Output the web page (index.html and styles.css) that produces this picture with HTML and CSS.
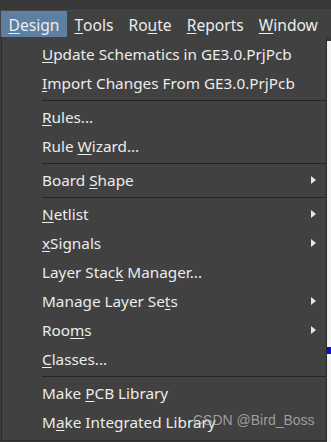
FILE: index.html
```html
<!DOCTYPE html>
<html lang="en">
<head>
    <meta charset="UTF-8">
    <title>Design Menu</title>
    <link rel="stylesheet" href="styles.css">
</head>
<body>
    <div class="topstrip"></div>
    <div class="menubar">
        <span class="bar-item active"><u>D</u>esign</span>
        <span class="bar-item"><u>T</u>ools</span>
        <span class="bar-item">Ro<u>u</u>te</span>
        <span class="bar-item"><u>R</u>eports</span>
        <span class="bar-item"><u>W</u>indow</span>
    </div>
    <div class="workspace">
        <div class="dropdown">
            <div class="item"><u>U</u>pdate Schematics in GE3.0.PrjPcb</div>
            <div class="item"><u>I</u>mport Changes From GE3.0.PrjPcb</div>
            <div class="sep"></div>
            <div class="item"><u>R</u>ules...</div>
            <div class="item">Rule <u>W</u>izard...</div>
            <div class="sep"></div>
            <div class="item sub">Board <u>S</u>hape</div>
            <div class="sep"></div>
            <div class="item sub"><u>N</u>etlist</div>
            <div class="item sub"><u>x</u>Signals</div>
            <div class="item">Layer Stac<u>k</u> Manager...</div>
            <div class="item sub">Manage Layer Se<u>t</u>s</div>
            <div class="item sub">Roo<u>m</u>s</div>
            <div class="item"><u>C</u>lasses...</div>
            <div class="sep"></div>
            <div class="item">Make <u>P</u>CB Library</div>
            <div class="item">M<u>a</u>ke Integrated Library</div>
        </div>
        <div class="canvas">
            <div class="blue-mark"></div>
        </div>
        <div class="watermark">CSDN @Bird_Boss</div>
    </div>
</body>
</html>
```

FILE: styles.css
```css
body {
    margin: 0;
    width: 331px;
    height: 442px;
    overflow: hidden;
    background-color: #3a3a3a;
    font-family: "Noto Sans", "Open Sans", sans-serif;
    font-size: 15.3px;
    color: #ececec;
}
u {
    text-decoration-thickness: 1px;
    text-underline-offset: 2px;
}
.topstrip {
    height: 10px;
    background-color: #393939;
    border-bottom: 1px solid #4a4a4a;
}
.menubar {
    display: flex;
    height: 26px;
    padding-left: 1px;
    background-color: #414141;
    font-size: 15.6px;
}
.bar-item {
    display: flex;
    align-items: center;
    padding: 1px 7.5px 0;
    height: 100%;
    box-sizing: border-box;
    white-space: nowrap;
}
.active {
    background-color: #5d7fa2;
}
.workspace {
    position: relative;
    display: flex;
    height: 405px;
}
.dropdown {
    width: 324px;
    margin-left: 1px;
    padding-top: 3px;
    background-color: #414141;
    border: 1px solid #2c2c2c;
    border-top: none;
    height: 400px;
}
.item {
    position: relative;
    height: 29px;
    line-height: 29px;
    padding-left: 40px;
    white-space: nowrap;
}
.sub::after {
    content: "";
    position: absolute;
    right: 10px;
    top: 10px;
    border-left: 5px solid #e6e6e6;
    border-top: 4px solid transparent;
    border-bottom: 4px solid transparent;
}
.sep {
    height: 1px;
    margin: 2px 0 2px 40px;
    background-color: #262626;
}
.canvas {
    flex: 1;
    background-color: #f4f4f4;
    margin-top: 4px;
}
.blue-mark {
    margin-top: 306px;
    height: 7px;
    background-color: #1010e0;
}
.watermark {
    position: absolute;
    left: 193px;
    top: 375px;
    font-family: "Liberation Sans", Arial, sans-serif;
    font-size: 14px;
    color: rgba(190, 190, 190, 0.75);
}
```
